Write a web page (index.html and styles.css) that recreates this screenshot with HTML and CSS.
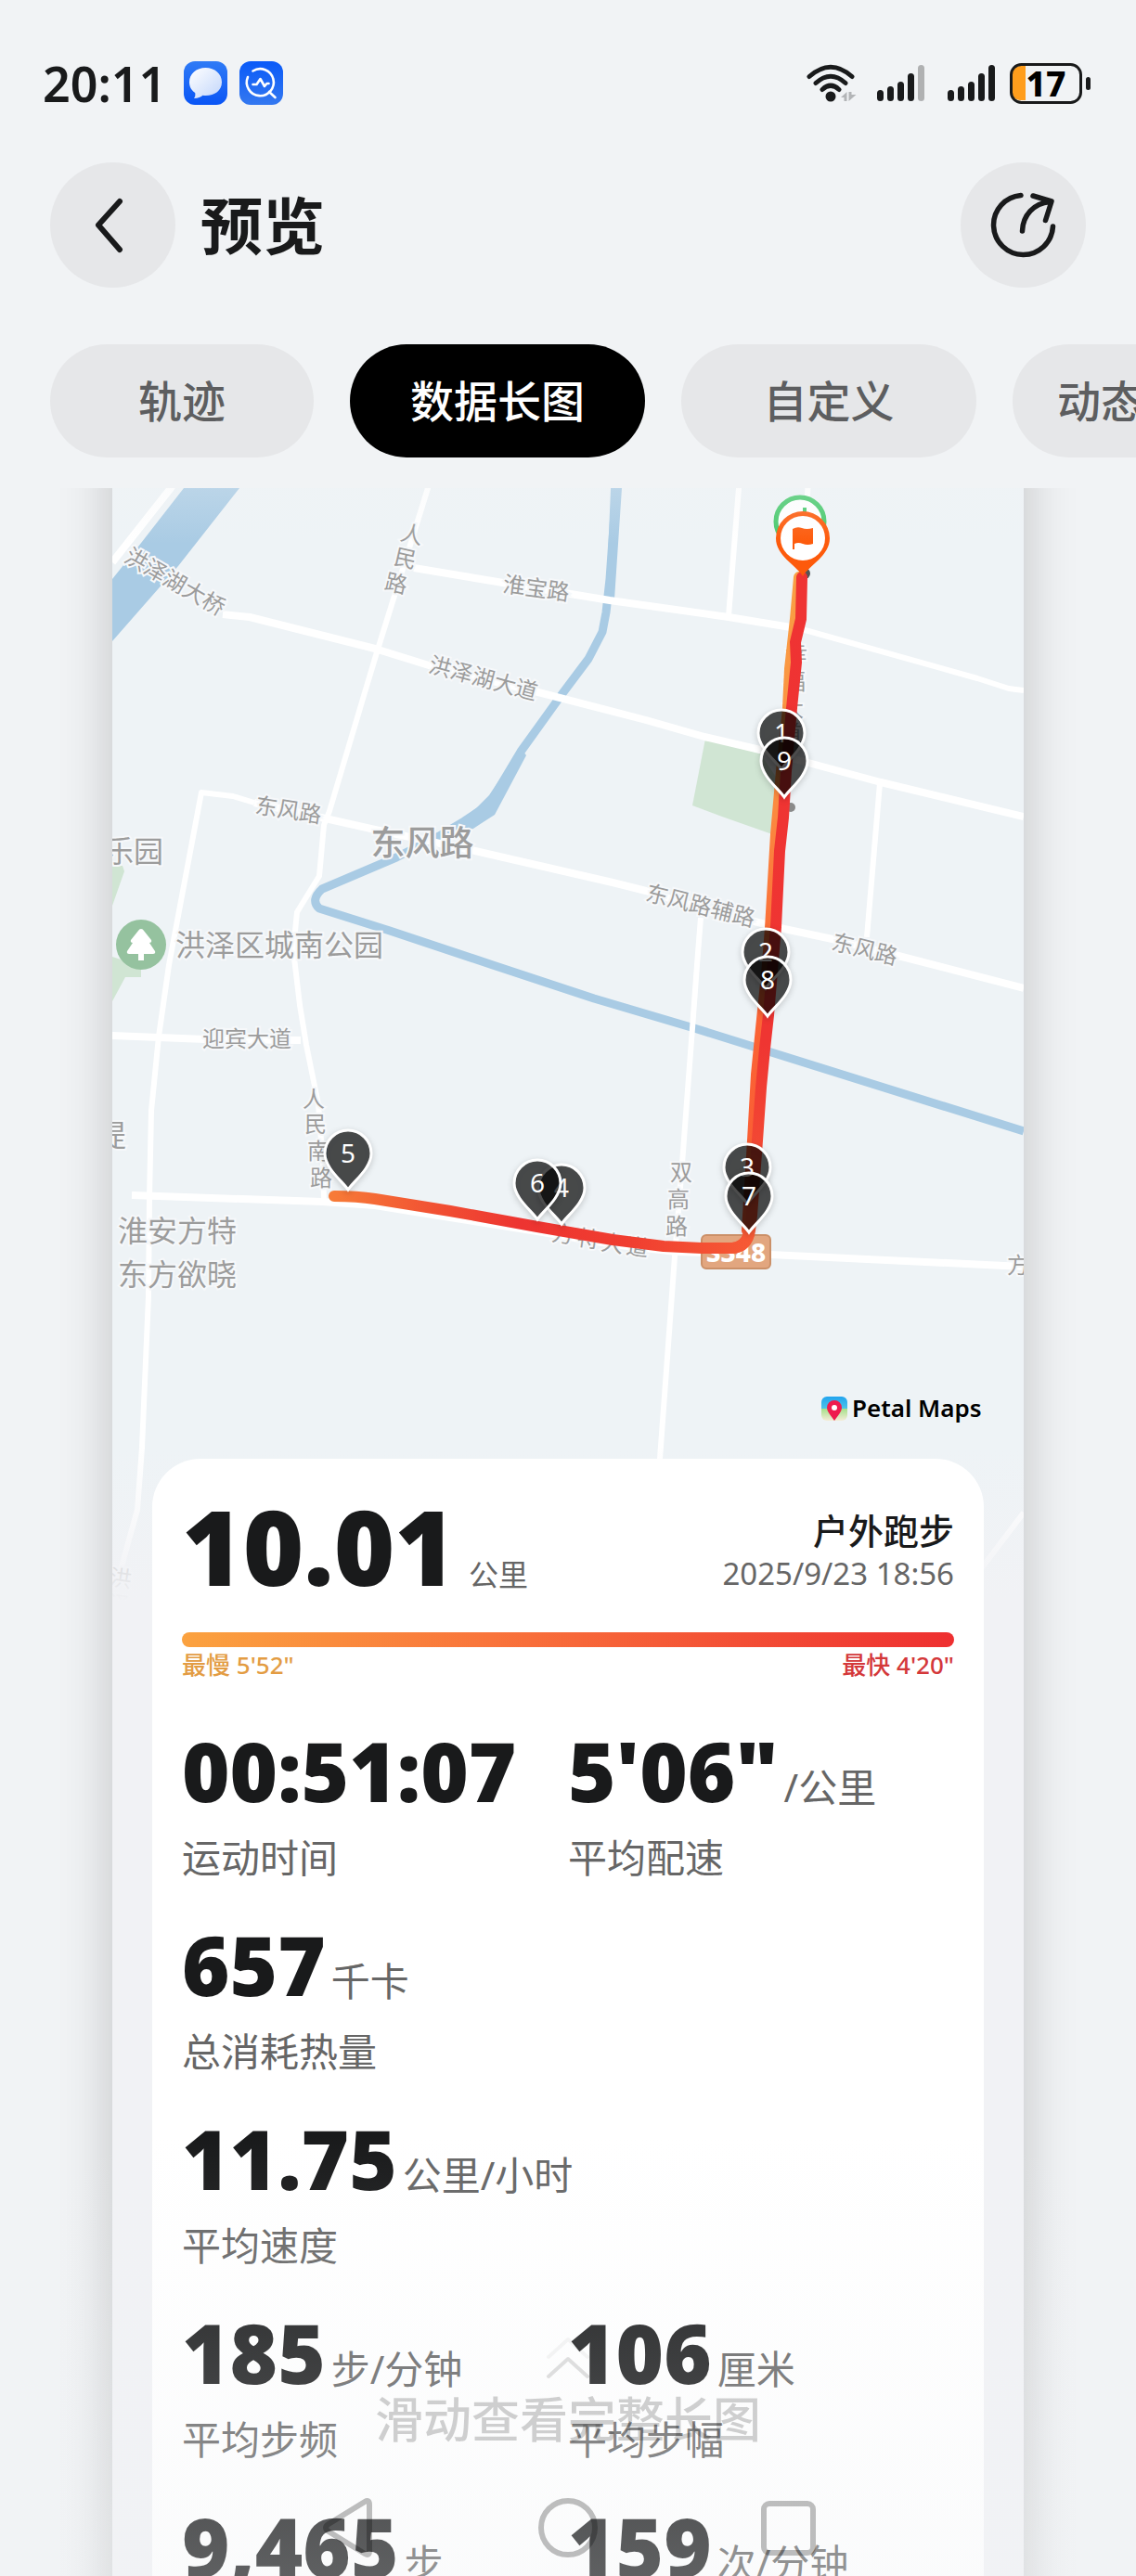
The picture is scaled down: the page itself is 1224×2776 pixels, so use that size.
FILE: index.html
```html
<!DOCTYPE html>
<html lang="zh-CN">
<head>
    <meta charset="UTF-8">
    <meta name="viewport" content="width=device-width, initial-scale=1.0">
    <title>预览</title>
    <link rel="stylesheet" href="styles.css">
</head>
<body>
    <div class="app">
        <div class="status-bar">
            <span class="clock">20:11</span>
            <svg class="app-icon" viewBox="0 0 47 47" aria-hidden="true">
                <defs>
                    <linearGradient id="blueDown" x1="0" y1="0" x2="0" y2="1"><stop offset="0" stop-color="#2f7bf6"/><stop offset="1" stop-color="#0a55f5"/></linearGradient>
                    <linearGradient id="blueUp" x1="0" y1="0" x2="0" y2="1"><stop offset="0" stop-color="#0a5af8"/><stop offset="1" stop-color="#3478f0"/></linearGradient>
                    <linearGradient id="bubble" x1="0" y1="0" x2="1" y2="1"><stop offset="0" stop-color="#fff"/><stop offset="1" stop-color="#c2d6fb"/></linearGradient>
                </defs>
                <rect width="47" height="47" rx="12" fill="url(#blueDown)"/>
                <path d="M23.500 7C33.500 7 41 13.500 41 22.500S33.500 37 23.500 37c-1 0-2 0-3-.3-2 1.800-5 3-9.500 3.300 1.200-1.500 1.700-3.500 1.200-6C8.300 31.500 6 27.500 6 22.500 6 13.500 13.500 7 23.500 7z" fill="url(#bubble)"/>
            </svg>
            <svg class="app-icon" viewBox="0 0 47 47" aria-hidden="true">
                <rect width="47" height="47" rx="12" fill="url(#blueUp)"/>
                <g fill="none" stroke="#fff" stroke-width="2.600" stroke-linecap="round" stroke-linejoin="round">
                    <path d="M9 17A14.500 14.500 0 1 0 14.500 10.500"/>
                    <path d="M32 33L38.500 39"/>
                    <path d="M14.500 25h4l4-6 4.500 8 2.500-3h2"/>
                </g>
            </svg>
            <svg class="signals" viewBox="0 0 308 46" aria-label="信号与电量">
                <g fill="none" stroke="#191a1b" stroke-width="5" stroke-linecap="round">
                    <path d="M4 15.500Q27 -5 50 15.500M11 22.500Q27 8 43 22.500M18 29.500Q27 21 36 29.500"/>
                </g>
                <circle cx="27" cy="37" r="5.500" fill="#191a1b"/>
                <path d="M44.500 32v10h-3v-4h-3.500zM46.500 42V32h3v3h5z" fill="#b3b5b7"/>
                <g stroke="#191a1b" stroke-width="7" stroke-linecap="round">
                    <path d="M80.500 33.500v5M91.500 29.500v9M102.500 24.500v14M113.500 15.500v23M156.500 33.500v5M167.500 29.500v9M178.500 24.500v14M189.500 15.500v23M200.500 6.500v32"/>
                    <path d="M124.500 6.500v32" stroke="#b0b1b2"/>
                </g>
                <path d="M231 4h6v37h-6a9 9 0 0 1-9-9V13a9 9 0 0 1 9-9z" fill="#ff9d1c"/>
                <rect x="221.500" y="2.500" width="75" height="41" rx="11" fill="none" stroke="#191a1b" stroke-width="3"/>
                <rect x="302" y="16" width="5" height="14" rx="2.500" fill="#191a1b"/>
                <text class="battery" x="259" y="37">17</text>
            </svg>
        </div>

        <header class="header">
            <button class="round-btn" type="button" aria-label="返回">
                <svg viewBox="0 0 135 135"><path d="M75 42L52 67.500 75 94" fill="none" stroke="#191a1b" stroke-width="6" stroke-linecap="round" stroke-linejoin="round"/></svg>
            </button>
            <h1 class="title">预览</h1>
            <button class="round-btn" type="button" aria-label="分享">
                <svg viewBox="0 0 135 135">
                    <g fill="none" stroke="#191a1b" stroke-width="5.500" stroke-linecap="round" stroke-linejoin="round">
                        <path d="M65 35.500A32 32 0 1 0 99.500 69"/>
                        <path d="M66.500 74C67 57 79 44 96 42.500M78 36L98 42 91.500 62.500"/>
                    </g>
                </svg>
            </button>
        </header>

        <nav class="tabs">
            <button class="tab tab-short" type="button">轨迹</button>
            <button class="tab active" type="button">数据长图</button>
            <button class="tab" type="button">自定义</button>
            <button class="tab tab-auto" type="button">动态轨迹</button>
        </nav>

        <main class="preview">
            <article class="sheet">
                <svg class="map" viewBox="121 466 982 1300">
                    <defs>
                        <linearGradient id="runBack" gradientUnits="userSpaceOnUse" x1="0" y1="620" x2="0" y2="1340">
                            <stop offset="0" stop-color="#f9a044"/><stop offset=".35" stop-color="#fb8a40"/><stop offset=".6" stop-color="#fb6636"/><stop offset="1" stop-color="#f95a33"/>
                        </linearGradient>
                        <linearGradient id="runDown" gradientUnits="userSpaceOnUse" x1="0" y1="620" x2="0" y2="1340">
                            <stop offset="0" stop-color="#ef3333"/><stop offset=".7" stop-color="#ef3532"/><stop offset="1" stop-color="#f65a35"/>
                        </linearGradient>
                        <linearGradient id="runAcross" gradientUnits="userSpaceOnUse" x1="360" y1="0" x2="808" y2="0">
                            <stop offset="0" stop-color="#f77a37"/><stop offset=".25" stop-color="#f15033"/><stop offset=".45" stop-color="#ed3431"/><stop offset=".7" stop-color="#f03d30"/><stop offset="1" stop-color="#f65a35"/>
                        </linearGradient>
                        <linearGradient id="mapFade" x1="0" y1="0" x2="0" y2="1">
                            <stop offset="0" stop-color="#f1f2f5" stop-opacity="0"/><stop offset=".8" stop-color="#f1f2f5"/>
                        </linearGradient>
                        <linearGradient id="topFade" x1="0" y1="0" x2="0" y2="1">
                            <stop offset="0" stop-color="#f1f3f5" stop-opacity=".25"/><stop offset="1" stop-color="#f1f3f5" stop-opacity="0"/>
                        </linearGradient>
                        <linearGradient id="petal" x1="0" y1="0" x2="0" y2="1">
                            <stop offset="0" stop-color="#22a4ef"/><stop offset=".5" stop-color="#4cc4e8"/><stop offset=".5" stop-color="#a5e08a"/><stop offset="1" stop-color="#f5ecd8"/>
                        </linearGradient>
                        <path id="pin" d="M0 0C-6 -9 -25 -23 -25 -39A25 25 0 0 1 25 -39C25 -23 6 -9 0 0z"/>
                    </defs>

                    <rect x="121" y="466" width="982" height="1300" fill="#eef3f6"/>

                    <!-- parks -->
                    <g fill="#d0e5d3">
                        <path d="M760 796L819 812 838 840 832 899 778 880 746 868z"/>
                        <path d="M121 933h11l2 6-13 37zM121 1031l31 10v12h-17l-14 26z"/>
                    </g>

                    <!-- water -->
                    <path d="M225 486L198 526 149 589 121 624V691L192 610 258 526 288 486z" fill="#a9cbe4"/>
                    <path d="M665 480L664 526 657 624 653 660 649 681 634 710 607 746 561 810 527 867 500 885 473 901 427 924 347 958Q334 970 344 979L420 1003 531 1040 640 1076 748 1108 863 1144 1103 1219" fill="none" stroke="#a9cbe4" stroke-width="9" stroke-linejoin="round"/>
                    <path d="M660 480h11l-1 46-8 120h-9zM561 806l6 8-34 64-14 9-18 12-12-10 24-18 14-14z" fill="#a9cbe4"/>

                    <!-- roads -->
                    <g fill="none" stroke="#fff" stroke-linejoin="round">
                        <g stroke-width="8">
                            <path d="M208 486L184 526 121 606"/>
                            <path d="M240 662L269 665 404 699 462 717 580 746 696 776 759 794 819 808 871 822 949 843 1103 880"/>
                            <path d="M446 612L542 628 657 647 785 665 852 676M274 865L355 883 404 894 512 917 660 951 696 960 752 978 845 1001 897 1012 968 1030 1103 1065"/>
                            <path d="M121 1116L221 1120 324 1121"/>
                            <path d="M142 1288L347 1295 404 1299 485 1312 579 1327 660 1341 729 1349 830 1352 1103 1365"/>
                        </g>
                        <g stroke-width="6">
                            <path d="M478 466L461 526 425 642 406 703 391 753 355 874 349 889 344 944 320 983 316 1024 323 1083 330 1126 343 1190 348 1254 349 1294"/>
                            <path d="M274 865L251 858 217 854 182 1040 171 1117 163 1197 161 1290 160 1397 153 1560 148 1627 134 1677 128 1700"/>
                            <path d="M852 676L871 680 1053 731 1087 742 1103 744M800 466L796 526 785 664M874 466L866 600M948 844L934 1010"/>
                            <path d="M755 989L751 1040 746 1108 735 1254 727 1354 711 1572 711 1590M1103 1630L1050 1700"/>
                        </g>
                    </g>

                    <!-- place names -->
                    <g class="map-label">
                        <text transform="translate(189 626) rotate(30)">洪泽湖大桥</text>
                        <text transform="translate(578 633) rotate(8)">淮宝路</text>
                        <text transform="translate(521 730) rotate(15)">洪泽湖大道</text>
                        <text transform="translate(311 872) rotate(9)">东风路</text>
                        <text transform="translate(755 975) rotate(14)">东风路辅路</text>
                        <text transform="translate(932 1022) rotate(14)">东风路</text>
                        <text x="266" y="1118">迎宾大道</text>
                        <text transform="translate(444 575) rotate(13)">人</text>
                        <text transform="translate(437 601) rotate(13)">民</text>
                        <text transform="translate(427 628) rotate(13)">路</text>
                        <text x="338" y="1183">人</text>
                        <text x="340" y="1210">民</text>
                        <text x="343" y="1239">南</text>
                        <text x="346" y="1268">路</text>
                        <text x="734" y="1262">双</text>
                        <text x="731" y="1291">高</text>
                        <text x="729" y="1320">路</text>
                        <text x="858" y="703">幸</text>
                        <text x="856" y="733">福</text>
                        <text x="854" y="762">大</text>
                        <text x="852" y="789">道</text>
                        <text transform="translate(607 1329) rotate(8)">方</text>
                        <text transform="translate(634 1334) rotate(8)">特</text>
                        <text transform="translate(660 1339) rotate(8)">大</text>
                        <text transform="translate(687 1343) rotate(8)">道</text>
                        <text x="1097" y="1362">方</text>
                        <text transform="translate(130 1700) rotate(8)">洪</text>
                        <text transform="translate(128 1728) rotate(8)">泽</text>
                    </g>
                    <g class="map-label place">
                        <text x="144" y="916">乐园</text>
                        <text x="301" y="1017">洪泽区城南公园</text>
                        <text x="120" y="1222">提</text>
                        <text x="191" y="1325">淮安方特</text>
                        <text x="191" y="1372">东方欲晓</text>
                    </g>
                    <text class="map-label district" x="455" y="907">东风路</text>

                    <circle cx="152" cy="1018" r="27" fill="#95c29f"/>
                    <path d="M152 1001q2 0 3 2l8 10q1 3-2 3l6 9q1 3-2 3h-10v7h-6v-7h-10q-3 0-2-3l6-9q-3 0-2-3l8-10q1-2 3-2z" fill="#fff"/>

                    <rect x="756" y="1331" width="74" height="36" rx="5" fill="#e2a67f" stroke="#cb9068" stroke-width="2"/>
                    <text class="road-no" x="793" y="1360">S348</text>

                    <!-- run track -->
                    <circle cx="867" cy="618" r="6" fill="#555"/>
                    <circle cx="852" cy="870" r="5" fill="#8a8a8a"/>
                    <g fill="none" stroke-width="12" stroke-linecap="round" stroke-linejoin="round">
                        <path d="M861 622L857 667 851 721 849 763 842 831 836 899 830 1000 826 1050 820 1108 815 1158 811 1229 805 1326" stroke="url(#runBack)"/>
                        <path d="M864 622L863 667 857 692 858 714 853 763 847 831 844 881 840 917 836 999 828 1094 824 1130 820 1172 816 1229 810 1310 808 1326Q805 1344 789 1345" stroke="url(#runDown)"/>
                        <path d="M360 1289Q385 1289 404 1292L485 1305 579 1322 660 1336 715 1343 756 1345 789 1345Q802 1344 807 1330" stroke="url(#runAcross)"/>
                    </g>

                    <!-- kilometre pins -->
                    <g class="pin">
                        <g transform="translate(842 829)"><use href="#pin"/><text y="-29">1</text></g>
                        <g transform="translate(845 859)"><use href="#pin"/><text y="-29">9</text></g>
                        <g transform="translate(825 1065)"><use href="#pin"/><text y="-29">2</text></g>
                        <g transform="translate(827 1095)"><use href="#pin"/><text y="-29">8</text></g>
                        <g transform="translate(805 1297)"><use href="#pin"/><text y="-29">3</text></g>
                        <g transform="translate(807 1328)"><use href="#pin"/><text y="-29">7</text></g>
                        <g transform="translate(375 1282)"><use href="#pin"/><text y="-29">5</text></g>
                        <g transform="translate(605 1319)"><use href="#pin"/><text y="-29">4</text></g>
                        <g transform="translate(579 1314)"><use href="#pin"/><text y="-29">6</text></g>
                    </g>

                    <!-- start and finish -->
                    <circle cx="862" cy="562" r="26" fill="#fff" stroke="#47c96c" stroke-width="5"/>
                    <path d="M867 547v8" stroke="#47c96c" stroke-width="4"/>
                    <path d="M865 621C858 609 836 599 836 580A29 29 0 0 1 894 580C894 599 872 609 865 621z" fill="#fd5a0b"/>
                    <circle cx="865" cy="580" r="24" fill="#fff"/>
                    <path d="M854 570q5-3 10-1t12 0v17q-6 2-11 0t-9 0v6h-2z" fill="#fd5a0b"/>

                    <rect x="885" y="1505" width="28" height="26" rx="6" fill="url(#petal)"/>
                    <path d="M899 1531c-3-5-8-9-8-14a8 8 0 0 1 16 0c0 5-5 9-8 14z" fill="#ee1c4e"/>
                    <circle cx="899" cy="1517" r="3" fill="#fff"/>
                    <text class="map-brand" x="918" y="1527">Petal Maps</text>

                    <rect x="121" y="526" width="982" height="60" fill="url(#topFade)"/>
                    <rect x="121" y="1560" width="982" height="206" fill="url(#mapFade)"/>
                </svg>

                <section class="card">
                    <div class="summary">
                        <div class="distance"><b>10.01</b><span class="unit">公里</span></div>
                        <div class="sport">
                            <div class="sport-name">户外跑步</div>
                            <time class="sport-time">2025/9/23 18:56</time>
                        </div>
                    </div>
                    <div class="pace-bar"></div>
                    <div class="pace-range">
                        <span class="slow">最慢 5'52"</span>
                        <span class="fast">最快 4'20"</span>
                    </div>
                    <div class="metrics">
                        <div class="metric"><div class="value"><b>00:51:07</b></div><div class="label">运动时间</div></div>
                        <div class="metric"><div class="value"><b>5'06"</b><span>/公里</span></div><div class="label">平均配速</div></div>
                        <div class="metric wide"><div class="value"><b>657</b><span>千卡</span></div><div class="label">总消耗热量</div></div>
                        <div class="metric wide"><div class="value"><b>11.75</b><span>公里/小时</span></div><div class="label">平均速度</div></div>
                        <div class="metric"><div class="value"><b>185</b><span>步/分钟</span></div><div class="label">平均步频</div></div>
                        <div class="metric"><div class="value"><b>106</b><span>厘米</span></div><div class="label">平均步幅</div></div>
                        <div class="metric"><div class="value"><b>9,465</b><span>步</span></div></div>
                        <div class="metric"><div class="value"><b>159</b><span>次/分钟</span></div></div>
                    </div>
                </section>
            </article>
        </main>

        <div class="bottom">
            <div class="hint">
                <svg viewBox="0 0 48 46" aria-hidden="true">
                    <g fill="none" stroke-width="4" stroke-linecap="round" stroke-linejoin="round">
                        <path d="M3 22L24 3 45 22" stroke="#000" stroke-opacity=".04"/>
                        <path d="M3 43L24 24 45 43" stroke="#000" stroke-opacity=".12"/>
                    </g>
                </svg>
                <p>滑动查看完整长图</p>
            </div>
            <div class="nav-keys">
                <button type="button" aria-label="返回键"><svg viewBox="0 0 66 66"><path d="M51 5q5-3 5 3v50q0 6-5 3L12 37q-6-4 0-8z"/></svg></button>
                <button type="button" aria-label="主屏幕"><svg viewBox="0 0 66 66"><circle cx="33" cy="33" r="29"/></svg></button>
                <button type="button" aria-label="最近任务"><svg viewBox="0 0 66 66"><rect x="7" y="7" width="53" height="53" rx="6"/></svg></button>
            </div>
        </div>
    </div>
</body>
</html>
```
FILE: styles.css
```css
* {
    box-sizing: border-box;
}
body {
    margin: 0;
    background-color: #f1f3f5;
    color: #191a1b;
    font-family: "Noto Sans", "Noto Sans CJK SC", sans-serif;
}
button {
    border: none;
    padding: 0;
    font-family: inherit;
    cursor: pointer;
}
p, h1 {
    margin: 0;
}
svg {
    display: block;
}
.app {
    position: relative;
    display: flex;
    flex-direction: column;
    height: 100vh;
    overflow: hidden;
}

/* status bar */
.status-bar {
    display: flex;
    align-items: center;
    gap: 13px;
    padding: 60px 48px 0 46px;
    height: 119px;
}
.clock {
    margin-right: 6px;
    font-size: 52px;
    line-height: 58px;
    font-weight: 600;
}
.app-icon {
    width: 47px;
    height: 47px;
}
.signals {
    width: 308px;
    margin-left: auto;
}
.battery {
    font-size: 37px;
    font-weight: 800;
    text-anchor: middle;
}

/* header */
.header {
    display: flex;
    align-items: center;
    gap: 27px;
    padding: 56px 54px 0;
}
.round-btn {
    width: 135px;
    height: 135px;
    border-radius: 50%;
    background-color: #e6e7e9;
}
.title {
    flex: 1;
    font-size: 67px;
    line-height: 80px;
    font-weight: 700;
}

/* tabs */
.tabs {
    display: flex;
    gap: 39px;
    margin-top: 61px;
    padding-left: 54px;
    overflow: hidden;
}
.tab {
    flex: none;
    width: 318px;
    height: 122px;
    padding-bottom: 6px;
    border-radius: 61px;
    background-color: #e6e7e9;
    color: #5d5e60;
    font-size: 47px;
    font-weight: 500;
}
.tab-short {
    width: 284px;
}
.tab-auto {
    width: auto;
    padding: 0 48px 6px;
}
.tab.active {
    background-color: #000;
    color: #fff;
}

/* preview */
.preview {
    flex: 1;
    min-height: 0;
    margin-top: 33px;
    padding: 0 121px;
    overflow: hidden;
}
.sheet {
    margin-top: -60px;
    background-color: #f1f2f5;
    box-shadow: 0 0 54px rgba(0, 0, 0, 0.2);
}
.map {
    width: 100%;
}
.map-label {
    font-size: 24px;
    fill: #9c9c9c;
    stroke: #f6f8fa;
    stroke-width: 4px;
    paint-order: stroke;
    text-anchor: middle;
    dominant-baseline: central;
}
.place {
    font-size: 32px;
}
.district {
    font-size: 37px;
    font-weight: 500;
}
.road-no {
    font-size: 28px;
    font-weight: 800;
    fill: #fff;
    text-anchor: middle;
}
.pin use {
    fill: rgba(0, 0, 0, 0.66);
    stroke: #fff;
    stroke-width: 3px;
    filter: drop-shadow(0 2px 3px rgba(0, 0, 0, 0.2));
}
.pin text {
    font-size: 28px;
    fill: #fff;
    text-anchor: middle;
}
.map-brand {
    font-size: 26px;
    font-weight: 600;
    fill: #000;
}

/* data card */
.card {
    position: relative;
    margin: -194px 43px 0;
    padding: 38px 32px;
    border-radius: 52px 52px 0 0;
    background-color: #fff;
}
.summary {
    display: flex;
    justify-content: space-between;
}
.distance {
    display: flex;
    align-items: baseline;
    gap: 14px;
}
.distance b {
    font-size: 112px;
    line-height: 112px;
    font-weight: 900;
}
.unit {
    color: #666;
    font-size: 32px;
}
.sport {
    padding-top: 14px;
    text-align: right;
}
.sport-name {
    font-size: 38px;
    line-height: 50px;
    font-weight: 500;
}
.sport-time {
    color: #666;
    font-size: 33px;
    line-height: 44px;
}
.pace-bar {
    height: 16px;
    margin-top: 37px;
    border-radius: 8px;
    background: linear-gradient(to right, #fba23f, #f9743b 40%, #ee2f30);
}
.pace-range {
    display: flex;
    justify-content: space-between;
    font-size: 26px;
    line-height: 38px;
    font-weight: 500;
}
.slow {
    color: #e39c43;
}
.fast {
    color: #d4383a;
}
.metrics {
    display: grid;
    grid-template-columns: 1fr 1fr;
    grid-auto-rows: 173px;
    row-gap: 36px;
    margin-top: 45px;
}
.metric {
    white-space: nowrap;
}
.wide {
    grid-column: 1 / 3;
}
.value {
    display: flex;
    align-items: baseline;
    gap: 6px;
}
.value b {
    font-size: 88px;
    line-height: 100px;
    font-weight: 900;
}
.value span, .label {
    color: #666;
    font-size: 42px;
    line-height: 56px;
}
.label {
    margin-top: 16px;
}

/* hint and system keys float over the sheet */
.bottom {
    position: absolute;
    left: 0;
    right: 0;
    bottom: 0;
    height: 476px;
    padding-top: 218px;
    background: linear-gradient(to bottom, rgba(241, 243, 245, 0), rgba(241, 243, 245, 0.32));
}
.hint {
    display: flex;
    flex-direction: column;
    align-items: center;
}
.hint svg {
    width: 48px;
}
.hint p {
    color: rgba(0, 0, 0, 0.18);
    font-size: 52px;
    line-height: 86px;
    font-weight: 500;
}
.nav-keys {
    display: flex;
    justify-content: center;
    gap: 171px;
    margin-top: 41px;
}
.nav-keys button {
    width: 66px;
    height: 66px;
    background: none;
}
.nav-keys svg {
    fill: none;
    stroke: rgba(0, 0, 0, 0.25);
    stroke-width: 6px;
}
```
